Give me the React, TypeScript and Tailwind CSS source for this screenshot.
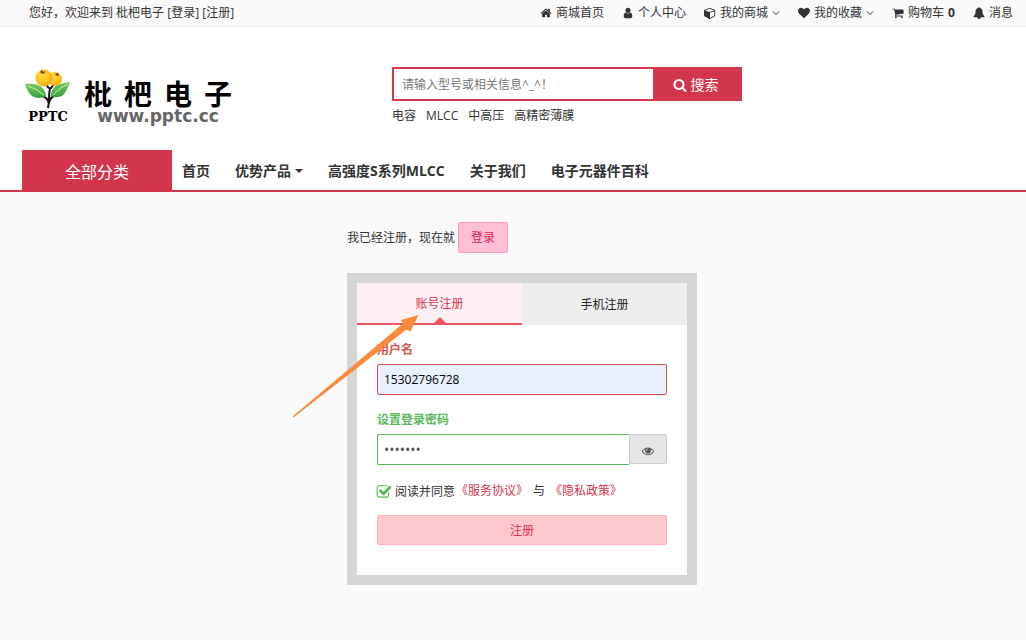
import React, { useState } from 'react';

const ICONS = {
  home: 'M1472 992v480q0 26-19 45t-45 19h-384v-384h-256v384h-384q-26 0-45-19t-19-45v-480q0-1 .5-3t.5-3l575-474 575 474q1 2 1 6zm223-69l-62 74q-8 9-21 11h-3q-13 0-21-7l-692-577-692 577q-12 8-24 7-13-2-21-11l-62-74q-8-10-7-23.5t11-21.5l719-599q32-26 76-26t76 26l244 204v-195q0-14 9-23t23-9h192q14 0 23 9t9 23v408l219 182q10 8 11 21.5t-7 23.5z',
  user: 'M1536 1399q0 109-62.5 187t-150.5 78h-854q-88 0-150.5-78t-62.5-187q0-85 8.5-160.5t31.5-152 58.5-131 94-89 134.5-34.5q131 128 313 128t313-128q76 0 134.5 34.5t94 89 58.5 131 31.5 152 8.5 160.5zm-256-887q0 159-112.5 271.5t-271.5 112.5-271.5-112.5-112.5-271.5 112.5-271.5 271.5-112.5 271.5 112.5 112.5 271.5z',
  cube: 'M896 1629l640-349v-636l-640 233v752zm-64-865l698-254-698-254-698 254zm832-252v768q0 35-18 65t-49 47l-704 384q-28 16-61 16t-61-16l-704-384q-31-17-49-47t-18-65v-768q0-40 23-73t61-47l704-256q22-8 44-8t44 8l704 256q38 14 61 47t23 73z',
  heart: 'M896 1664q-26 0-44-18l-624-602q-10-8-27.5-26t-55.5-65.5-68-97.5-53.5-121-23.5-138q0-220 127-344t351-124q62 0 126.5 21.5t120 58 95.5 68.5 76 68q36-36 76-68t95.5-68.5 120-58 126.5-21.5q224 0 351 124t127 344q0 221-229 450l-623 600q-18 18-44 18z',
  cart: 'M704 1536q0 52-38 90t-90 38-90-38-38-90 38-90 90-38 90 38 38 90zm896 0q0 52-38 90t-90 38-90-38-38-90 38-90 90-38 90 38 38 90zm128-1088v512q0 24-16.5 42.5t-40.5 21.5l-1044 122q13 60 13 70 0 16-24 64h920q26 0 45 19t19 45-19 45-45 19h-1024q-26 0-45-19t-19-45q0-11 8-31.5t16-36 21.5-40 15.5-29.5l-177-823h-204q-26 0-45-19t-19-45 19-45 45-19h256q16 0 28.5 6.5t19.5 15.5 13 24.5 8 26 5.5 29.5 4.5 26h1201q26 0 45 19t19 45z',
  bell: 'M912 1696q0-16-16-16-59 0-101.5-42.5t-42.5-101.5q0-16-16-16t-16 16q0 73 51.5 124.5t124.5 51.5q16 0 16-16zm816-288q0 52-38 90t-90 38h-448q0 106-75 181t-181 75-181-75-75-181h-448q-52 0-90-38t-38-90q50-42 91-88t85-119.5 74.5-158.5 50-206 19.5-260q0-152 117-282.5t307-158.5q-8-19-8-39 0-40 28-68t68-28 68 28 28 68q0 20-8 39 190 28 307 158.5t117 282.5q0 139 19.5 260t50 206 74.5 158.5 85 119.5 91 88z',
  search: 'M1216 832q0-185-131.5-316.5t-316.5-131.5-316.5 131.5-131.5 316.5 131.5 316.5 316.5 131.5 316.5-131.5 131.5-316.5zm512 832q0 52-38 90t-90 38q-54 0-90-38l-343-342q-179 124-399 124-143 0-273.5-55.5t-225-150-150-225-55.5-273.5 55.5-273.5 150-225 225-150 273.5-55.5 273.5 55.5 225 150 150 225 55.5 273.5q0 220-124 399l343 343q37 37 37 90z',
  eye: 'M1664 960q-152-236-381-353 61 104 61 225 0 185-131.5 316.5t-316.5 131.5-316.5-131.5-131.5-316.5q0-121 61-225-229 117-381 353 133 205 333.5 326.5t434.5 121.5 434.5-121.5 333.5-326.5zm-720-384q0-20-14-34t-34-14q-125 0-214.5 89.5t-89.5 214.5q0 20 14 34t34 14 34-14 14-34q0-86 61-147t147-61q20 0 34-14t14-34zm848 384q0 34-20 69-140 230-376.5 368.5t-499.5 138.5-499.5-139-376.5-368q-20-35-20-69t20-69q140-229 376.5-368t499.5-139 499.5 139 376.5 368q20 35 20 69z',
  check: 'M1472 930v318q0 119-84.5 203.5t-203.5 84.5h-832q-119 0-203.5-84.5t-84.5-203.5v-832q0-119 84.5-203.5t203.5-84.5h832q63 0 117 25 15 7 18 23 3 17-9 29l-49 49q-10 10-23 10-3 0-9-2-23-6-45-6h-832q-66 0-113 47t-47 113v832q0 66 47 113t113 47h832q66 0 113-47t47-113v-254q0-13 9-22l64-64q10-10 23-10 6 0 12 3 20 8 20 29zm231-489l-814 814q-24 24-57 24t-57-24l-430-430q-24-24-24-57t24-57l110-110q24-24 57-24t57 24l263 263 647-647q24-24 57-24t57 24l110 110q24 24 24 57t-24 57z',
};

type IconName = keyof typeof ICONS;

function Icon({ name, className = 'size-3' }: { name: IconName; className?: string }) {
  return (
    <svg viewBox="0 0 1792 1792" fill="currentColor" className={className} aria-hidden="true">
      <path d={ICONS[name]} />
    </svg>
  );
}

const topLinks: { icon: IconName; label: string; menu?: boolean; count?: number }[] = [
  { icon: 'home', label: '商城首页' },
  { icon: 'user', label: '个人中心' },
  { icon: 'cube', label: '我的商城', menu: true },
  { icon: 'heart', label: '我的收藏', menu: true },
  { icon: 'cart', label: '购物车', count: 0 },
  { icon: 'bell', label: '消息' },
];

const hotWords = ['电容', 'MLCC', '中高压', '高精密薄膜'];

const navItems = [
  { label: '首页' },
  { label: '优势产品', menu: true },
  { label: '高强度S系列MLCC' },
  { label: '关于我们' },
  { label: '电子元器件百科' },
];

function TopBar() {
  return (
    <div className="flex h-[27px] items-center justify-between border-b border-[#eeeeee] bg-[#fafafa] pr-[13px] pl-[29px]">
      <div>
        您好，欢迎来到 枇杷电子 <a href="#login">[登录]</a> <a href="#register">[注册]</a>
      </div>
      <ul className="flex items-center gap-[18px]">
        {topLinks.map((item) => (
          <li key={item.label}>
            <a href="#" className="flex items-center gap-1">
              <Icon name={item.icon} />
              <span>{item.label}</span>
              {item.menu && (
                <svg viewBox="0 0 8 8" className="size-2" fill="none" stroke="currentColor" aria-hidden="true">
                  <path d="M1 2.500l3 3 3-3" />
                </svg>
              )}
              {item.count !== undefined && <b>{item.count}</b>}
            </a>
          </li>
        ))}
      </ul>
    </div>
  );
}

function Logo() {
  return (
    <a href="#" className="flex w-[370px] items-end gap-[13px] pl-[3px]">
      <div className="flex flex-col items-center">
        <svg viewBox="0 0 46 40" className="h-10 w-[46px]" aria-hidden="true">
          <defs>
            <radialGradient id="fruit" cx="0.4" cy="0.35" r="0.75">
              <stop offset="0" stopColor="#ffd83a" />
              <stop offset="0.6" stopColor="#fdc21e" />
              <stop offset="1" stopColor="#f39a10" />
            </radialGradient>
            <linearGradient id="leaf" x1="0" y1="0" x2="0" y2="1">
              <stop offset="0" stopColor="#7cc858" />
              <stop offset="1" stopColor="#36a046" />
            </linearGradient>
          </defs>
          <path
            d="M22 16Q23 20 26 19L29 15M25 19Q24 24 24 30Q24 34 23 39M15 26Q23 28 24 35M31 26Q25 28 24 34"
            fill="none"
            stroke="#111111"
            strokeWidth="2"
          />
          <circle cx="30" cy="10" r="7" fill="url(#fruit)" />
          <circle cx="19" cy="9" r="8.500" fill="url(#fruit)" />
          <path d="M15 3l2-2 1 2 2-1-1 3-3-1z" fill="#7a3b10" />
          <path d="M30 5l3-1 1 2-2 1z" fill="#7a3b10" />
          <path d="M0 15Q10 14 15 17Q20 20 21 27Q14 31 7 27Q3 24 0 15z" fill="url(#leaf)" />
          <path d="M45 13Q36 14 31 17Q26 20 26 27Q33 30 38 26Q42 22 45 13z" fill="url(#leaf)" />
          <path d="M3 17Q11 19 19 26M43 15Q35 18 28 26" fill="none" stroke="#cdeeb4" />
        </svg>
        <span className="font-['DejaVu_Serif',serif] text-[13px] leading-[15px] font-bold text-black">PPTC</span>
      </div>
      <div className="flex flex-col items-center">
        <span className="flex gap-3 text-[28px] leading-7 font-bold text-black">
          <span>枇</span>
          <span>杷</span>
          <span>电</span>
          <span>子</span>
        </span>
        <span className="font-['DejaVu_Sans',sans-serif] text-[17px] leading-4 font-bold text-[#666666]">
          www.pptc.cc
        </span>
      </div>
    </a>
  );
}

function SearchBox() {
  return (
    <div className="w-[350px]">
      <form className="flex h-[34px]" onSubmit={(e) => e.preventDefault()}>
        <input
          type="text"
          aria-label="搜索"
          placeholder="请输入型号或相关信息^_^！"
          className="min-w-0 flex-1 border-2 border-r-0 border-[#d3364c] bg-white px-2 pt-[2px] outline-none placeholder:text-[#777777]"
        />
        <button
          type="submit"
          className="flex w-[89px] items-center justify-center gap-1 bg-[#d3364c] pt-[2px] pr-1 text-sm text-white"
        >
          <Icon name="search" className="size-[14px]" />
          搜索
        </button>
      </form>
      <div className="mt-[5px] flex gap-[10px] leading-5">
        {hotWords.map((word) => (
          <a key={word} href="#">
            {word}
          </a>
        ))}
      </div>
    </div>
  );
}

function Header() {
  return (
    <header className="border-b-2 border-[#d3364c] bg-white px-[22px]">
      <div className="flex h-[123px] items-start pt-10">
        <div className="pt-[2px]">
          <Logo />
        </div>
        <SearchBox />
      </div>
      <nav className="flex h-10">
        <a href="#" className="flex w-[150px] items-center justify-center bg-[#d3364c] pt-1 text-base text-white">
          全部分类
        </a>
        <ul className="flex items-center gap-[25px] pt-[2px] pl-[10px] text-sm font-bold">
          {navItems.map((item) => (
            <li key={item.label}>
              <a href="#" className="flex items-center gap-1">
                {item.label}
                {item.menu && (
                  <svg viewBox="0 0 8 4" className="h-1 w-2" fill="currentColor" aria-hidden="true">
                    <path d="M0 0h8L4 4z" />
                  </svg>
                )}
              </a>
            </li>
          ))}
        </ul>
      </nav>
    </header>
  );
}

function RegisterCard() {
  const [username, setUsername] = useState('15302796728');
  const [password, setPassword] = useState('1234567');
  const [agreed, setAgreed] = useState(true);
  const [visible, setVisible] = useState(false);

  return (
    <section className="relative border-10 border-[#d5d5d5] bg-white">
      <div className="flex h-[42px]" role="tablist">
        <button
          type="button"
          role="tab"
          aria-selected="true"
          className="relative flex-1 border-b-2 border-[#ee5563] bg-[#fff0f5] pt-[2px] text-[#d3364c]"
        >
          账号注册
          <svg
            viewBox="0 0 12 6"
            className="absolute bottom-0 left-1/2 h-[6px] w-3 -translate-x-1/2"
            fill="#ee5563"
            aria-hidden="true"
          >
            <path d="M0 6L6 0l6 6z" />
          </svg>
        </button>
        <button type="button" role="tab" aria-selected="false" className="flex-1 bg-[#eeeeee] pt-[2px] text-[#222222]">
          手机注册
        </button>
      </div>

      <form className="flex flex-col gap-[15px] px-5 pt-[15px] pb-[30px]" onSubmit={(e) => e.preventDefault()}>
        <div className="flex flex-col gap-1">
          <label htmlFor="username" className="leading-5 font-bold text-[#d9534f]">
            用户名
          </label>
          <input
            id="username"
            type="text"
            value={username}
            onChange={(e) => setUsername(e.target.value)}
            className="h-[31px] rounded-xs border border-[#d9534f] bg-[#e8f0fe] px-[6px] text-black outline-none"
          />
        </div>

        <div className="flex flex-col gap-1">
          <label htmlFor="password" className="leading-5 font-bold text-[#5cb85c]">
            设置登录密码
          </label>
          <div className="flex h-[31px]">
            <input
              id="password"
              type={visible ? 'text' : 'password'}
              value={password}
              onChange={(e) => setPassword(e.target.value)}
              className="min-w-0 flex-1 rounded-l-xs border border-r-0 border-[#5cb85c] bg-white px-[6px] text-sm text-[#555555] outline-none"
            />
            <button
              type="button"
              aria-label="显示密码"
              onClick={() => setVisible(!visible)}
              className="flex h-[30px] w-[38px] items-center justify-center rounded-r-xs border border-[#cccccc] bg-[#e6e6e6] pt-1 text-[#555555]"
            >
              <Icon name="eye" />
            </button>
          </div>
        </div>

        <div className="flex items-center leading-5">
          <label className="flex items-center gap-1 pt-[2px]">
            <span className="relative size-[14px]">
              <input
                type="checkbox"
                checked={agreed}
                onChange={(e) => setAgreed(e.target.checked)}
                className="peer block size-[14px] appearance-none rounded-xs border border-[#5cb85c] checked:border-transparent"
              />
              <Icon
                name="check"
                className="pointer-events-none absolute -top-px -left-px hidden size-4 text-[#5cb85c] peer-checked:block"
              />
            </span>
            阅读并同意
          </label>
          <a href="#" className="ml-px text-[#d3364c]">
            《服务协议》
          </a>
          <span className="px-[5px]">与</span>
          <a href="#" className="text-[#d3364c]">
            《隐私政策》
          </a>
        </div>

        <button
          type="submit"
          className="-mt-[2px] h-[30px] rounded-xs border border-[#ffb0b9] bg-[#ffc8ce] pt-[2px] text-[#d3364c]"
        >
          注册
        </button>
      </form>

      {/* pointer towards the account tab */}
      <svg
        viewBox="0 0 128 106"
        className="pointer-events-none absolute top-[31px] -left-[65px] h-[106px] w-32"
        fill="#fb8a3c"
        aria-hidden="true"
      >
        <path d="M126.500 1L109 6l2 3.500L0.500 102.500l1 1L114.500 15.500l4 2z" />
      </svg>
    </section>
  );
}

export default function App() {
  return (
    <div className="min-h-screen bg-[#fafafa] font-['Open_Sans','Noto_Sans_CJK_SC',sans-serif] text-xs text-[#333333]">
      <TopBar />
      <Header />
      <main className="flex justify-center pt-[30px] pl-[18px]">
        <div className="flex w-[350px] flex-col gap-5">
          <div className="flex items-center gap-[3px]">
            <span>我已经注册，现在就</span>
            <a
              href="#login"
              className="flex h-[31px] w-[50px] items-center justify-center rounded-xs border border-[#ff9db9] bg-[#ffc0d6] text-[#e01f5a]"
            >
              登录
            </a>
          </div>
          <RegisterCard />
        </div>
      </main>
    </div>
  );
}
